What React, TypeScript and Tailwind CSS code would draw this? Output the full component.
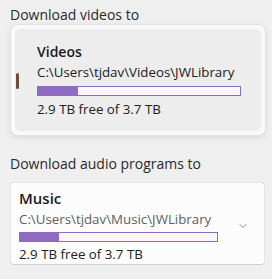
import { ChevronDown } from "lucide-react";

type Folder = {
  name: string;
  path: string;
  free: string;
  used: number;
};

const videos: Folder = {
  name: "Videos",
  path: "C:\\Users\\tjdav\\Videos\\JWLibrary",
  free: "2.9 TB free of 3.7 TB",
  used: 20,
};

const music: Folder = {
  name: "Music",
  path: "C:\\Users\\tjdav\\Music\\JWLibrary",
  free: "2.9 TB free of 3.7 TB",
  used: 20,
};

function UsageBar({ used }: { used: number }) {
  return (
    <div className="h-[10px] border border-[#8c6cbb] bg-[#f8f5fb]">
      <div className="h-full bg-[#8f6bc1]" style={{ width: `${used}%` }} />
    </div>
  );
}

export default function App() {
  return (
    <div
      className="w-[272px] h-[279px] bg-[#efefef] overflow-hidden text-[#1b1b1b]"
      style={{ fontFamily: '"Segoe UI", "Open Sans", sans-serif' }}
    >
      <p className="pl-[10px] pt-[6px] text-[14px] leading-[18px] text-[#2a2a2a]">
        Download videos to
      </p>

      {/* open dropdown with the selected item */}
      <div className="ml-[10px] w-[256px] h-[112px] rounded-[8px] border border-[#e2e2e2] bg-[#f9f9f9] p-[4px] shadow-[0_2px_6px_rgba(0,0,0,0.08)]">
        <div className="relative h-full rounded-[5px] bg-[#ededed] pl-[22px] pr-[20px] pt-[13px]">
          <span className="absolute left-[1px] top-[44px] h-[16px] w-[3px] rounded-full bg-[#6e4b3b]" />
          <p className="text-[14px] leading-[19px] font-semibold">{videos.name}</p>
          <p className="mt-[2px] text-[13.3px] leading-[19px] text-[#202020]">{videos.path}</p>
          <div className="mt-[4px]">
            <UsageBar used={videos.used} />
          </div>
          <p className="mt-[4px] text-[13.3px] leading-[19px] text-[#202020]">{videos.free}</p>
        </div>
      </div>

      <p className="pl-[10px] pt-[18px] text-[14px] leading-[19px] text-[#2a2a2a]">
        Download audio programs to
      </p>

      <div className="mt-[9px] ml-[10px] w-[255px] h-[83px] flex items-start rounded-[4px] border border-[#e5e5e5] border-b-[#d0d0d0] bg-[#fcfcfc] pl-[8px] pr-[15px] pt-[6px]">
        <div className="flex-1 min-w-0">
          <p className="text-[15px] leading-[19px] font-semibold text-[#1a1a1a]">{music.name}</p>
          <p className="mt-[2px] text-[13.3px] leading-[19px] text-[#5f5f5f]">{music.path}</p>
          <div className="mt-[3px] w-[199px]">
            <UsageBar used={music.used} />
          </div>
          <p className="mt-[3px] text-[13.3px] leading-[19px] text-[#202020]">{music.free}</p>
        </div>
        <ChevronDown size={12} strokeWidth={1.5} className="mt-[31px] text-[#6a6a6a]" />
      </div>
    </div>
  );
}
